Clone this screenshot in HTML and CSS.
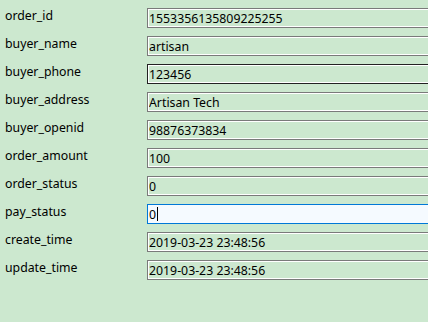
FILE: index.html
```html
<!DOCTYPE html>
<html>
<head>
    <link rel="stylesheet" href="styles.css">
</head>
<body>
    <form class="detail">
        <label for="order_id">order_id</label>
        <input type="text" id="order_id" value="1553356135809225255">

        <label for="buyer_name">buyer_name</label>
        <input type="text" id="buyer_name" value="artisan">

        <label for="buyer_phone">buyer_phone</label>
        <input type="text" id="buyer_phone" class="hover" value="123456">

        <label for="buyer_address">buyer_address</label>
        <input type="text" id="buyer_address" value="Artisan Tech">

        <label for="buyer_openid">buyer_openid</label>
        <input type="text" id="buyer_openid" value="98876373834">

        <label for="order_amount">order_amount</label>
        <input type="text" id="order_amount" value="100">

        <label for="order_status">order_status</label>
        <input type="text" id="order_status" value="0">

        <label for="pay_status">pay_status</label>
        <div class="field-active">
            <input type="text" id="pay_status" class="active" value="0">
        </div>

        <label for="create_time">create_time</label>
        <input type="text" id="create_time" value="2019-03-23 23:48:56">

        <label for="update_time">update_time</label>
        <input type="text" id="update_time" value="2019-03-23 23:48:56">
    </form>
</body>
</html>
```

FILE: styles.css
```css
html, body {
    overflow: hidden;
}
body {
    margin: 8px 0 0 5px;
    background-color: #cce8cf;
    font-family: "Noto Sans", sans-serif;
    font-size: 12.3px;
    color: #000;
}
.detail {
    display: grid;
    grid-template-columns: 142px 300px;
    row-gap: 8px;
    align-items: center;
}
.detail label {
    line-height: 20px;
    margin-top: -4px;
}
.detail input {
    box-sizing: border-box;
    display: block;
    height: 20px;
    width: 300px;
    margin: 0;
    padding: 0 1px;
    border: 1px solid #7a7a7a;
    box-shadow: inset 0 0 0 1px #fff;
    background: transparent;
    font-family: inherit;
    font-size: inherit;
    color: #000;
    outline: none;
}
.detail input.hover {
    border-color: #222;
}
.detail input.active {
    border-color: #0078d7;
    background: #f5faff;
    box-shadow: none;
}
.field-active {
    position: relative;
}
/* text caret after the value */
.field-active::after {
    content: '';
    position: absolute;
    left: 10px;
    top: 3px;
    width: 1px;
    height: 14px;
    background: #000;
}
```
